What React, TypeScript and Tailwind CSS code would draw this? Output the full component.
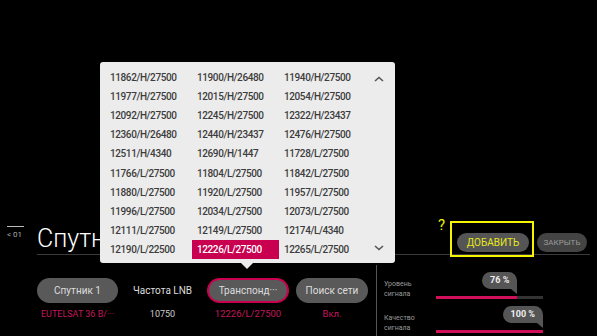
import React from "react";

const rows: string[][] = [
  ["11862/H/27500", "11900/H/26480", "11940/H/27500"],
  ["11977/H/27500", "12015/H/27500", "12054/H/27500"],
  ["12092/H/27500", "12245/H/27500", "12322/H/23437"],
  ["12360/H/26480", "12440/H/23437", "12476/H/27500"],
  ["12511/H/4340", "12690/H/1447", "11728/L/27500"],
  ["11766/L/27500", "11804/L/27500", "11842/L/27500"],
  ["11880/L/27500", "11920/L/27500", "11957/L/27500"],
  ["11996/L/27500", "12034/L/27500", "12073/L/27500"],
  ["12111/L/27500", "12149/L/27500", "12174/L/4340"],
  ["12190/L/22500", "12226/L/27500", "12265/L/27500"],
];

function Chevron({ up }: { up?: boolean }) {
  return (
    <svg width="10" height="6" viewBox="0 0 10 6">
      <polyline
        points={up ? "1,5 5,1.5 9,5" : "1,1 5,4.5 9,1"}
        fill="none"
        stroke="#555"
        strokeWidth="1.6"
      />
    </svg>
  );
}

function Signal({ label1, label2, pct, text }: { label1: string; label2: string; pct: number; text: string }) {
  return (
    <div className="flex items-end">
      <div className="w-[52px] text-[7px] leading-[10px] text-[#9a9a9a]">
        <div>{label1}</div>
        <div>{label2}</div>
      </div>
      <div className="w-[107px] flex flex-col">
        <div className="flex flex-col items-end" style={{ width: `${pct}%` }}>
          <div className="h-[17px] px-[8px] rounded-t-[9px] rounded-bl-[9px] bg-[#555] text-[9px] font-bold text-[#eee] flex items-center">
            {text}
          </div>
          <div className="w-0 h-0 border-l-[6px] border-l-transparent border-t-[5px] border-t-[#555]" />
        </div>
        <div className="mt-[2px] h-[3px] bg-[#333] flex">
          <div className="h-full bg-[#d0105a]" style={{ width: `${pct}%` }} />
        </div>
      </div>
    </div>
  );
}

export default function App() {
  return (
    <div
      className="relative w-[597px] h-[336px] bg-black overflow-hidden flex flex-col"
      style={{ fontFamily: "Roboto, 'Noto Sans', sans-serif" }}
    >
      <div className="h-[221px] shrink-0" />
      {/* title row */}
      <div className="flex h-[34px] shrink-0">
        <div className="w-[37px] pl-[7px] pt-[5px] flex flex-col">
          <div className="w-[17px] h-px bg-[#bbb]" />
          <div className="mt-[3px] text-[8px] leading-[10px] text-[#aaa]">&lt; 01</div>
        </div>
        <div className="flex-1 mr-[7px] border-b border-[#3a3a3a] flex items-end justify-between pb-[2px]">
          <div className="text-[25px] leading-[25px] font-light text-white mb-[1px]">Спутник</div>
          <div className="flex items-center gap-[8px] pr-[3px]">
            <div className="relative">
              <div className="absolute -left-[19px] -top-[15px] text-[15px] leading-[15px] text-[#f0f000]">?</div>
              <div className="absolute -left-[7px] -top-[12px] w-[84px] h-[36px] border-2 border-[#f5f500]" />
              <div className="w-[72px] h-[19px] rounded-full bg-[#555] flex items-center justify-center text-[10px] text-[#e8e820]">
                ДОБАВИТЬ
              </div>
            </div>
            <div className="w-[50px] h-[19px] rounded-full bg-[#444] flex items-center justify-center text-[8px] text-[#9a9a9a]">
              ЗАКРЫТЬ
            </div>
          </div>
        </div>
      </div>
      {/* bottom row */}
      <div className="flex mt-[10px] flex-1">
        <div className="w-[376px] pl-[37px] pt-[13px] flex items-start">
          <div className="w-[81px] flex flex-col items-center">
            <div className="w-full h-[25px] rounded-full bg-[#595959] flex items-center justify-center text-[10px] text-[#ddd]">
              Спутник 1
            </div>
            <div className="mt-[5px] text-[9px] leading-[12px] text-[#c2185b] whitespace-nowrap">EUTELSAT 36 B/···</div>
          </div>
          <div className="w-[89px] flex flex-col items-center">
            <div className="h-[25px] flex items-center text-[10px] text-[#ddd]">Частота LNB</div>
            <div className="mt-[5px] text-[9px] leading-[12px] text-[#ccc]">10750</div>
          </div>
          <div className="w-[82px] flex flex-col items-center">
            <div className="w-full h-[25px] rounded-full bg-[#595959] border-2 border-[#c8004f] flex items-center justify-center text-[10px] text-[#ddd]">
              Транспонд···
            </div>
            <div className="mt-[5px] text-[9.5px] leading-[12px] text-[#c2185b]">12226/L/27500</div>
          </div>
          <div className="ml-[7px] w-[72px] flex flex-col items-center">
            <div className="w-full h-[25px] rounded-full bg-[#595959] flex items-center justify-center text-[10px] text-[#ddd]">
              Поиск сети
            </div>
            <div className="mt-[5px] text-[9.5px] leading-[12px] text-[#c2185b]">Вкл.</div>
          </div>
        </div>
        <div className="border-l border-[#555] pl-[7px] pt-[7px] flex flex-col gap-[7px]">
          <Signal label1="Уровень" label2="сигнала" pct={76} text="76 %" />
          <Signal label1="Качество" label2="сигнала" pct={100} text="100 %" />
        </div>
      </div>

      {/* popup */}
      <div className="absolute left-[100px] top-[62px] w-[295px] h-[201px] bg-[#ececec] rounded-[3px] pt-[6px] pl-[5px] flex">
        <div className="flex flex-col">
          {rows.map((r, i) => (
            <div key={i} className="flex h-[19.1px]">
              {r.map((c, j) => {
                const sel = i === 9 && j === 1;
                return (
                  <div
                    key={j}
                    className={
                      "w-[87px] pl-[5px] flex items-center text-[10px] font-medium tracking-[-0.4px] " +
                      (sel ? "bg-[#c8004f] text-white" : "text-[#3c3c3c]")
                    }
                  >
                    {c}
                  </div>
                );
              })}
            </div>
          ))}
        </div>
        <div className="flex-1 flex flex-col items-center justify-between pt-[8px] pb-[12px] pr-[3px]">
          <Chevron up />
          <Chevron />
        </div>
        <div className="absolute left-[141px] -bottom-[6px] w-0 h-0 border-l-[6px] border-r-[6px] border-l-transparent border-r-transparent border-t-[6px] border-t-[#ececec]" />
      </div>
    </div>
  );
}
